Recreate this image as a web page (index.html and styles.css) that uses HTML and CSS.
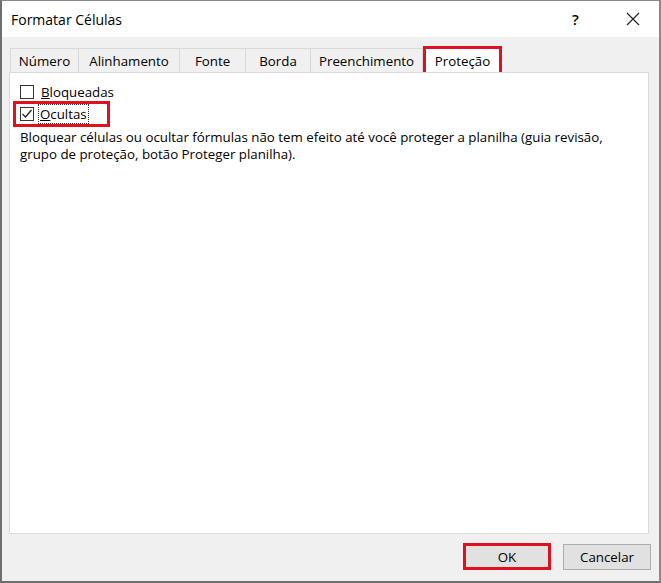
FILE: index.html
```html
<!DOCTYPE html>
<html>
<head>
<meta charset="utf-8">
<link rel="stylesheet" href="styles.css">
</head>
<body>
<div class="window">
  <div class="titlebar">
    <span class="title">Formatar Células</span>
    <span class="help">?</span>
    <span class="close">
      <svg width="14" height="14" viewBox="0 0 14 14"><path d="M1 1 L13 13 M13 1 L1 13" stroke="#222" stroke-width="1.2" fill="none"/></svg>
    </span>
  </div>
  <div class="tabs">
    <div class="tab t1">Número</div>
    <div class="tab t2">Alinhamento</div>
    <div class="tab t3">Fonte</div>
    <div class="tab t4">Borda</div>
    <div class="tab t5">Preenchimento</div>
    <div class="tab t6 active">Proteção</div>
  </div>
  <div class="panel">
    <div class="row">
      <span class="cb"></span>
      <span class="label"><u>B</u>loqueadas</span>
    </div>
    <div class="row mark">
      <span class="cb checked">
        <svg width="12" height="12" viewBox="0 0 12 12"><path d="M1.5 6 L4.5 9 L10.5 2" stroke="#222" stroke-width="1.3" fill="none"/></svg>
      </span>
      <span class="label focus"><u>O</u>cultas</span>
    </div>
    <p class="desc">Bloquear células ou ocultar fórmulas não tem efeito até você proteger a planilha (guia revisão,<br>grupo de proteção, botão Proteger planilha).</p>
  </div>
  <div class="buttons">
    <div class="btn ok">OK</div>
    <div class="btn cancel">Cancelar</div>
  </div>
</div>
</body>
</html>
```
FILE: styles.css
```css
html, body {
  margin: 0;
  padding: 0;
}
body {
  font-family: "Open Sans", "Noto Sans", sans-serif;
  color: #000;
  background: #f0f0f0;
}
.window {
  width: 661px;
  height: 583px;
  box-sizing: border-box;
  border: 1px solid #888;
  border-left: 2px solid #6f6f6f;
  border-right: 2px solid #8a8a8a;
  border-bottom: 2px solid #6f6f6f;
  background: #f0f0f0;
  display: flex;
  flex-direction: column;
}
.titlebar {
  height: 36px;
  background: #fff;
  display: flex;
  align-items: center;
  padding-left: 9px;
  flex-shrink: 0;
}
.title {
  font-size: 14px;
  flex: 1;
}
.help {
  font-size: 15px;
  font-weight: 600;
  width: 14px;
  margin-right: 40px;
}
.close {
  width: 14px;
  height: 14px;
  margin-right: 19px;
  display: flex;
}
.tabs {
  display: flex;
  margin-top: 11px;
  padding-left: 8px;
  height: 24px;
  align-items: flex-end;
}
.tab {
  box-sizing: border-box;
  height: 24px;
  border: 1px solid #d9d9d9;
  border-bottom: none;
  border-right: none;
  font-size: 13.3px;
  display: flex;
  align-items: center;
  justify-content: center;
  padding-top: 1px;
}
.t1 { width: 68px; }
.t2 { width: 101px; }
.t3 { width: 66px; }
.t4 { width: 65px; }
.t5 { width: 113px; border-right: 1px solid #d9d9d9; }
.t6 { width: 79px; }
.tab.active {
  height: 26px;
  background: #fff;
  border: 3px solid #e0111f;
  border-bottom: none;
  padding-top: 0;
}
.panel {
  box-sizing: border-box;
  margin: 0 10px 0 7px;
  height: 462px;
  background: #fff;
  border: 1px solid #dadada;
  padding: 10px 10px;
  flex-shrink: 0;
}
.row {
  display: flex;
  align-items: center;
  height: 17px;
  font-size: 13.3px;
}
.cb {
  box-sizing: border-box;
  width: 14px;
  height: 14px;
  border: 1px solid #333;
  background: #fff;
  margin-right: 7px;
  display: flex;
  align-items: center;
  justify-content: center;
}
.row.mark {
  box-sizing: border-box;
  width: 97px;
  height: 26px;
  border: 3px solid #e0111f;
  margin-left: -7px;
  padding-left: 4px;
  margin-top: 1px;
}
.label.focus {
  outline: 1px dotted #333;
  outline-offset: 0;
  padding: 0 1px;
  margin-left: -2px;
}
.desc {
  margin: 2px 0 0;
  font-size: 13.3px;
  line-height: 17px;
}
.buttons {
  display: flex;
  justify-content: flex-end;
  gap: 12px;
  padding-right: 8px;
  margin-top: 10px;
}
.btn {
  box-sizing: border-box;
  width: 88px;
  height: 26px;
  background: #e1e1e1;
  border: 1px solid #adadad;
  font-size: 13.3px;
  display: flex;
  align-items: center;
  justify-content: center;
}
.btn.ok {
  border: 3px solid #e0111f;
  height: 27px;
  margin-top: -1px;
}
```
